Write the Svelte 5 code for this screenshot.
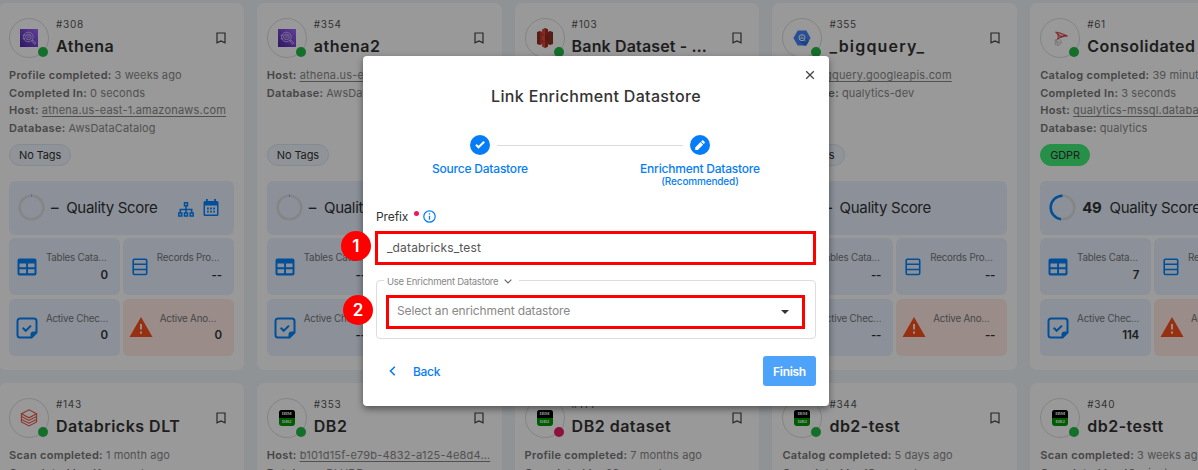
<script>
  const none = ['--', '--', '--', '--'];
  const cards = [
    { id: 308, name: 'Athena', logo: 'athena', meta: [['Profile completed', '3 weeks ago'], ['Completed In', '0 seconds'], ['Host', 'athena.us-east-1.amazonaws.com'], ['Database', 'AwsDataCatalog']], score: '–', tools: true, values: ['0', '--', '0', '0'] },
    { id: 354, name: 'athena2', logo: 'athena', meta: [['Host', 'athena.us-east-1.amazonaws.com'], ['Database', 'AwsDataCatalog']], score: '–', values: none },
    { id: 103, name: 'Bank Dataset - …', tight: true, logo: 's3', meta: [], score: '–', values: none },
    { id: 355, name: '_bigquery_', wide: true, logo: 'bigquery', meta: [['Host', 'bigquery.googleapis.com'], ['Database', 'qualytics-dev']], score: '–', values: none },
    { id: 61, name: 'Consolidated', logo: 'mssql', meta: [['Catalog completed', '39 minutes ago'], ['Completed In', '3 seconds'], ['Host', 'qualytics-mssql.database'], ['Database', 'qualytics']], tag: 'GDPR', score: '49', values: ['7', '--', '114', '--'] },
    { id: 143, name: 'Databricks DLT', logo: 'databricks', meta: [['Scan completed', '1 month ago'], ['Completed In', '41 seconds']], score: '–', values: none },
    { id: 353, name: 'DB2', logo: 'db2', meta: [['Host', 'b101d15f-e79b-4832-a125-4e8d4…'], ['Database', 'BLUDB']], score: '–', values: none },
    { id: 114, name: 'DB2 dataset', logo: 'db2', down: true, meta: [['Profile completed', '7 months ago'], ['Completed In', '28 seconds']], score: '–', values: none },
    { id: 344, name: 'db2-test', logo: 'db2', meta: [['Catalog completed', '5 days ago'], ['Completed In', '15 seconds']], score: '–', values: none },
    { id: 340, name: 'db2-testt', logo: 'db2', meta: [['Scan completed', '3 weeks ago'], ['Completed In', '43 minutes']], score: '–', values: none }
  ];
  const tiles = [['table', 'Tables Cata…'], ['rows', 'Records Pro…'], ['check', 'Active Chec…'], ['warn', 'Active Ano…']];
</script>

{#snippet logo(kind)}
  {#if kind === 'athena'}
    <svg width="18" height="18" viewBox="0 0 18 18">
      <defs><linearGradient id="violet" x1="0" y1="1" x2="1" y2="0"><stop stop-color="#4d27a8" /><stop offset="1" stop-color="#a166ff" /></linearGradient></defs>
      <rect width="18" height="18" fill="url(#violet)" />
      <g fill="none" stroke="#e6dcff" stroke-width=".7"><circle cx="8.4" cy="8" r="4.8" /><circle cx="8.4" cy="8" r="2.8" /><path d="M11.8 12l1-1 3 3-1.2 1.300zM2.700 6.200h2.600M2.700 9.800H5M7 7h3M7.300 8.800h2.200" /></g>
    </svg>
  {:else if kind === 's3'}
    <svg width="18" height="22" viewBox="0 0 18 22">
      <path d="M1 5l3-1v14l-3-1z" fill="#8c3123" /><path d="M4 4l5 2v10l-5 2z" fill="#c13b2d" /><path d="M17 5l-3-1v14l3-1z" fill="#8c3123" /><path d="M14 4L9 6v10l5 2z" fill="#8c3123" />
      <path d="M9 1L6 2.500v4l3 1 3-1v-4zM9 21l-3-1.500v-4l3-1 3 1v4z" fill="#d94a3c" /><path d="M9 1l3 1.500v4l-3 1zM9 21l3-1.500v-4l-3-1z" fill="#a52d22" />
      <path d="M6 9l3-1 3 1v4l-3 1-3-1z" fill="#df4c3e" /><path d="M9 8l3 1v4l-3 1z" fill="#98251c" />
    </svg>
  {:else if kind === 'bigquery'}
    <svg width="18" height="16" viewBox="0 0 18 16"><path d="M4.700.5h8.600L17.600 8l-4.300 7.500H4.700L.4 8z" fill="#4386fa" /><path d="M10 5.500l5.800 5.600-2.500 4.400h-2.600L7 11.600z" fill="#3070df" /><circle cx="9" cy="7.700" r="3" fill="none" stroke="#fff" stroke-width="1" /><path d="M7.900 7.700v1.200M9 6.500v2.400M10.100 7.400v1.500M11.200 9.900l1.400 1.400" stroke="#fff" stroke-width=".9" /></svg>
  {:else if kind === 'mssql'}
    <svg width="18" height="18" viewBox="0 0 18 18"><path d="M4.500 3.200C7.500 3 12 5 16.500 7c-4 .2-7.500 1.200-10.500 3.500 2-2.500 1.300-5-1.500-7.300z" fill="#d9333d" fill-opacity=".35" stroke="#d9333d" stroke-width=".9" /><path d="M6.500 4.500l3 3.500 5.500-1.800" fill="none" stroke="#cb2630" stroke-width=".9" /><path d="M4 11l4.500-.3M3.800 11c.9 1 .8 3 .2 4.300l3.200 1.200 3-2.300-.5-3.700M4.300 13.300h5.400M5.200 11l2 5" fill="none" stroke="#bdbdbd" stroke-width=".8" /></svg>
  {:else if kind === 'databricks'}
    <svg width="18" height="18" viewBox="0 0 18 18" fill="none" stroke="#ee5545" stroke-width="1.050"><path d="M1.400 4.800L9 .8l7.600 4L9 8.800zM1.400 4.800v2.600L9 11.400l7.600-4V4.800M1.400 7.400v3L9 14.200l7.600-3.800v-3M1.400 10.400V13L9 17l7.600-4v-2.600" /></svg>
  {:else}
    <span class="db2"><b>IBM</b><i>DB2</i></span>
  {/if}
{/snippet}

{#snippet tileIcon(kind)}
  {#if kind === 'table'}
    <svg width="20" height="18" viewBox="0 0 20 18"><path fill-rule="evenodd" d="M2.500.5h15a2 2 0 0 1 2 2v13a2 2 0 0 1-2 2h-15a2 2 0 0 1-2-2v-13a2 2 0 0 1 2-2zM2.500 5.500v3.700h6.600V5.500zm8.500 0v3.700h6.500V5.500zM2.500 11.200v4.100h6.600v-4.100zm8.500 0v4.100h6.500v-4.100z" fill="#0284ff" /></svg>
  {:else if kind === 'rows'}
    <svg width="16" height="18" viewBox="0 0 16 18" fill="none" stroke="#0284ff" stroke-width="1.600"><rect x="1.200" y="1.300" width="13.500" height="15.200" rx="1.200" /><path d="M1 6.300h14M1 11.500h14" /></svg>
  {:else if kind === 'check'}
    <svg width="22" height="22" viewBox="0 0 22 22"><path d="M4 1.500h14a2.500 2.500 0 0 1 2.500 2.500v11.500l-5 5H4A2.500 2.500 0 0 1 1.500 18V4A2.500 2.500 0 0 1 4 1.500z" fill="none" stroke="#0284ff" stroke-width="2" /><path d="M14.500 21v-3.500a3 3 0 0 1 3-3H21z" fill="#0284ff" /><path d="M6.700 10.800l3 3 5.300-5.200" fill="none" stroke="#0284ff" stroke-width="2" /></svg>
  {:else}
    <svg width="24" height="20" viewBox="0 0 24 20"><path fill-rule="evenodd" d="M12 0L.5 20h23zM11 7v5.500h2V7zm0 7.500v2.200h2v-2.200z" fill="#fb501d" /></svg>
  {/if}
{/snippet}

<div class="screen">
  <main class="grid">
    {#each cards as card}
      <article class="card">
        <header>
          <div class="avatar">{@render logo(card.logo)}<span class="status" class:down={card.down}></span></div>
          <div class="heading"><span class="id">#{card.id}</span><h2 class:tight={card.tight} class:wide={card.wide}>{card.name}</h2></div>
          <svg class="bookmark" width="10" height="12" viewBox="0 0 10 12"><path d="M1 1h8v9.800L5 8.900l-4 1.900z" fill="none" stroke="#444" stroke-width="1.200" /></svg>
        </header>
        <dl>
          {#each card.meta as [key, value]}
            <div><dt>{key}:</dt><dd class:link={key === 'Host'}>{value}</dd></div>
          {/each}
        </dl>
        <span class="tag" class:gdpr={card.tag}>{card.tag ?? 'No Tags'}</span>
        <section class="quality">
          <svg width="27" height="27" viewBox="0 0 28 28" fill="none" stroke-width="2.600"><circle cx="14" cy="14" r="12.300" stroke="#dedede" />{#if card.score === '49'}<path d="M14 1.700a12.300 12.300 0 0 0-1.500 24.500" stroke="#0284ff" />{:else}<path d="M14 .5v2.500" stroke="#8ab6ec" stroke-width="1" />{/if}</svg>
          <b class:num={card.score === '49'}>{card.score}</b><span>Quality Score</span>
          {#if card.tools}
            <svg class="tree" width="16" height="15" viewBox="0 0 16 15" fill="none" stroke="#0284ff" stroke-width="1.500"><path d="M6.500.8h3v3h-3zM.8 11h3v3h-3zM6.500 11h3v3h-3zM12.200 11h3v3h-3zM8 4v7M2.300 11V7.500h11.400V11" /></svg>
            <svg width="16" height="18" viewBox="0 0 16 18"><path fill-rule="evenodd" d="M3 0h1.800v2h6.400V0H13v2h1a1.500 1.500 0 0 1 1.500 1.500v12A1.500 1.500 0 0 1 14 17H2a1.500 1.500 0 0 1-1.500-1.500v-12A1.500 1.500 0 0 1 2 2h1zM2 6.500v9h12v-9z" fill="#0284ff" /><path d="M4 9.500h8M4 12.700h8" stroke="#0284ff" stroke-width="1.800" stroke-dasharray="1.800 1.300" /></svg>
          {/if}
        </section>
        <section class="tiles">
          {#each tiles as [kind, label], i}
            <div class="tile {kind}">
              {@render tileIcon(kind)}
              <div><span>{label}</span><b>{card.values[i]}</b></div>
            </div>
          {/each}
        </section>
      </article>
    {/each}
  </main>

  <div class="backdrop"></div>

  <section class="modal">
    <button class="close" aria-label="Close"><svg width="10" height="10" viewBox="0 0 10 10"><path d="M1.200 1.200l7.600 7.600M8.800 1.200L1.200 8.800" stroke="#444" stroke-width="1.300" /></svg></button>
    <h1>Link Enrichment Datastore</h1>
    <div class="steps">
      <div class="step"><svg width="20" height="20" viewBox="0 0 20 20"><circle cx="10" cy="10" r="10" fill="#067df7" /><path d="M6 9.800l2.500 2.500 5.700-5.600" fill="none" stroke="#fff" stroke-width="2" /></svg><span>Source Datastore</span></div>
      <div class="rule"></div>
      <div class="step"><svg width="20" height="20" viewBox="0 0 20 20"><circle cx="10" cy="10" r="10" fill="#067df7" /><path d="M5.200 12.400v2.600h2.600l5.300-5.300-2.600-2.600zM11.100 6.500l2.600 2.600 1-1a.9.9 0 0 0 0-1.200l-1.400-1.400a.9.9 0 0 0-1.200 0z" fill="#fff" /></svg><span>Enrichment Datastore</span><small>(Recommended)</small></div>
    </div>
    <div class="label">Prefix<i></i><svg width="13" height="13" viewBox="0 0 13 13"><circle cx="6.500" cy="6.500" r="5.700" fill="none" stroke="#067df7" stroke-width="1.200" /><path d="M6.500 5.800v3.900M6.500 3.300v1.300" stroke="#067df7" stroke-width="1.300" /></svg></div>
    <div class="field">_databricks_test<span class="marker">1</span></div>
    <div class="group">
      <div class="legend">Use Enrichment Datastore<svg width="8" height="5" viewBox="0 0 8 5"><path d="M.7.7L4 4 7.300.7" fill="none" stroke="#666" stroke-width="1.200" /></svg></div>
      <div class="field select"><span>Select an enrichment datastore</span><svg width="8" height="4" viewBox="0 0 8 4"><path d="M0 0h8L4 4z" fill="#333" /></svg><span class="marker">2</span></div>
    </div>
    <footer>
      <button class="back"><svg width="7" height="10" viewBox="0 0 7 10"><path d="M5.800.8L1.500 5l4.300 4.200" fill="none" stroke="#067df7" stroke-width="1.600" /></svg>Back</button>
      <button class="finish">Finish</button>
    </footer>
  </section>
</div>

<style>
  :global(body) { margin: 0; overflow: hidden; }
  * { box-sizing: border-box; }
  button { border: 0; padding: 0; background: none; font: inherit; letter-spacing: inherit; }
  svg { display: block; flex: none; }
  .screen { position: relative; width: 1198px; height: 470px; overflow: hidden; background: #eef5fb; font-family: Inter, sans-serif; color: #333; }
  .grid { display: grid; grid-template-columns: repeat(5, 244.800px); grid-auto-rows: 367px; gap: 13px; margin: 3px 0 0 -1px; width: 1280px; }
  .card { display: flex; flex-direction: column; padding: 15px 10px 0; border-radius: 7px; background: #fff; overflow: hidden; }
  header { display: flex; height: 40px; }
  .avatar { position: relative; width: 40px; height: 40px; border: 1px solid #dcdcdc; border-radius: 50%; display: grid; place-items: center; flex: none; }
  .status { position: absolute; right: 0; bottom: 0; width: 10px; height: 10px; border-radius: 50%; background: #21ba45; }
  .status.down { background: #e91e63; }
  .heading { display: flex; flex-direction: column; margin-left: 7px; white-space: nowrap; flex: 1; min-width: 0; }
  .id { font-size: 10px; line-height: 13px; letter-spacing: .7px; color: #555; }
  h2 { margin: 4px 0 0; font-size: 16px; line-height: 22px; font-weight: 600; letter-spacing: .5px; color: #333; }
  h2.tight { letter-spacing: .15px; }
  h2.wide { letter-spacing: 1.200px; }
  .bookmark { margin: 14px 7.500px 0 0; }
  dl { margin: 9px 0 0; height: 75px; font-size: 11px; line-height: 17.600px; color: #888; white-space: nowrap; }
  dl div { display: flex; gap: 3px; }
  dt { font-weight: 600; color: #757575; letter-spacing: .3px; }
  dd { margin: 0; letter-spacing: .1px; }
  .link { letter-spacing: .2px; text-decoration: underline; text-underline-offset: 2px; }
  .tag { display: flex; align-items: center; align-self: flex-start; margin-top: 2px; height: 22px; padding: 0 9px; border: 1px solid #d9e7f5; border-radius: 11px; background: #f1f7fd; font-size: 11px; letter-spacing: -.12px; color: #333; }
  .tag.gdpr { background: #40ee78; border-color: #40ee78; }
  .quality { display: flex; align-items: center; height: 54px; margin-top: 15px; padding: 0 15px 1px 9px; border-radius: 6px; background: #e8f1ff; font-size: 15px; letter-spacing: -.3px; white-space: nowrap; }
  .quality b { margin: 0 8px 0 6px; font-weight: 500; }
  .quality .num { font-weight: 700; }
  .tree { margin: 3px 9px 0 auto; }
  .tiles { display: grid; grid-template-columns: 1fr 1fr; grid-auto-rows: 57px; gap: 4px 3px; margin-top: 3px; }
  .tile { display: flex; align-items: center; padding: 0 12px 0 8px; border-radius: 6px; background: #e8f1ff; }
  .tile div { display: flex; flex-direction: column; margin: -1px 0 0 auto; width: 62px; gap: 4px; white-space: nowrap; }
  .tile span { font-size: 9.800px; line-height: 13px; letter-spacing: -.2px; color: #777; }
  .tile b { font-size: 11.500px; line-height: 14px; letter-spacing: -.2px; text-align: right; font-weight: 600; }
  .rows { padding-left: 9px; }
  .rows div { width: 65px; }
  .check { padding-left: 7px; }
  .check div, .warn div { margin-top: -2px; gap: 3px; }
  .warn { padding-left: 6px; background: #ffe9e5; }
  .warn svg { margin-top: -1px; }
  .db2 { display: flex; flex-direction: column; width: 16px; height: 16px; border-radius: 3px; overflow: hidden; background: #090; text-align: center; color: #fff; font: 700 5px/8px "Liberation Serif", serif; }
  .db2 b { background: #000; }
  .db2 i { font-style: normal; }
  .backdrop { position: absolute; inset: 0; background: rgba(0, 0, 0, .4); }
  .modal { position: absolute; left: 363px; top: 56px; width: 466px; height: 350px; padding: 0 13px; border-radius: 4px; background: #fff; box-shadow: 0 3px 7px rgba(0, 0, 0, .45); }
  .close { display: block; margin: 0 1px 0 auto; padding-top: 14px; height: 24px; }
  h1 { margin: 5px 0 0; text-align: center; font-size: 16px; line-height: 22px; font-weight: 500; letter-spacing: .33px; }
  .steps { display: flex; margin: 28px 54px 0 42px; height: 77px; color: #067df7; }
  .step { display: flex; flex-direction: column; align-items: center; width: 124px; font-size: 12px; font-weight: 500; letter-spacing: -.22px; white-space: nowrap; }
  .step span { margin-top: 7px; line-height: 14px; }
  .step small { margin-top: -1px; font-size: 10px; line-height: 12px; letter-spacing: -.15px; }
  .rule { flex: 1; height: 1px; margin: 10px -45px 0; background: #dcdcdc; }
  .label { display: flex; align-items: center; height: 16px; margin-top: -4px; font-size: 12px; letter-spacing: -.1px; }
  .label i { width: 5px; height: 5px; margin: -6px 4px 0 6px; border-radius: 50%; background: #ec1763; }
  .field { position: relative; display: flex; align-items: center; height: 34px; margin: 7px 0 0 -1px; padding: 0 9px; border: 3px solid #f00; font-size: 12px; line-height: 16px; letter-spacing: .15px; color: #555; }
  .group { position: relative; height: 59px; margin-top: 15px; padding: 14px 10px 0 9px; border: 1px solid #ddd; border-radius: 4px; }
  .legend { position: absolute; left: 7px; top: -6px; display: flex; align-items: center; gap: 6px; padding: 0 7px 0 3px; background: #fff; font-size: 9.500px; line-height: 13px; letter-spacing: -.25px; color: #888; }
  .select { margin: 0; padding: 0 13px 0 8px; justify-content: space-between; letter-spacing: -.13px; color: #888; }
  .select span:first-child { margin-top: -2px; }
  .marker { position: absolute; left: -37px; top: -3px; width: 30px; height: 30px; border-radius: 50%; background: #f00; color: #fff; display: grid; place-items: center; font: 600 17px Inter, sans-serif; }
  .select .marker { left: -46px; }
  footer { display: flex; justify-content: space-between; align-items: center; margin-top: 17px; height: 30px; font-size: 12px; font-weight: 500; letter-spacing: -.3px; }
  .back { display: flex; align-items: center; gap: 17px; margin-left: 13px; color: #067df7; }
  .finish { width: 53px; height: 30px; border-radius: 3px; background: #4da3f9; color: #fff; font-weight: 600; }
</style>
